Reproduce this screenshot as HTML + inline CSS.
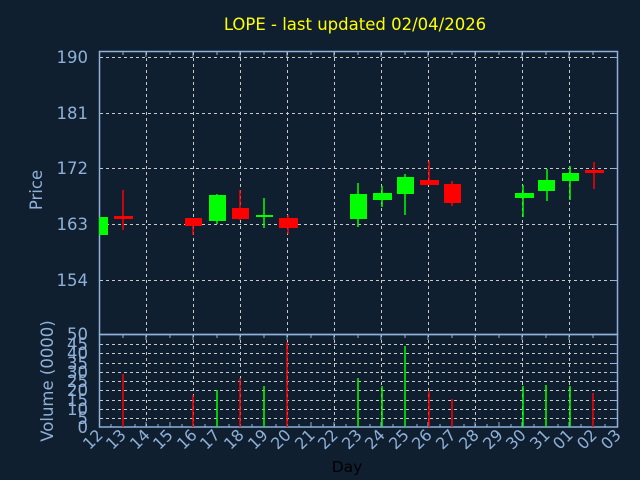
<!DOCTYPE html>
<html><head><meta charset="utf-8"><style>
html,body{margin:0;padding:0;background:#0f1f2f;}
svg{display:block;font-family:"DejaVu Sans","Liberation Sans",sans-serif;}
</style></head><body>
<svg width="640" height="480" viewBox="0 0 640 480" xmlns="http://www.w3.org/2000/svg">
<rect width="640" height="480" fill="#0f1f2f"/>
<text x="355" y="30" fill="#ffff00" font-size="16.5" text-anchor="middle">LOPE - last updated 02/04/2026</text>
<g stroke="#c8c8c8" stroke-width="1" stroke-dasharray="3,3">
<line x1="100" y1="57.5" x2="612" y2="57.5"/><line x1="100" y1="113.5" x2="612" y2="113.5"/><line x1="100" y1="168.5" x2="612" y2="168.5"/><line x1="100" y1="224.5" x2="612" y2="224.5"/><line x1="100" y1="280.5" x2="612" y2="280.5"/>
<line x1="100" y1="344.5" x2="612" y2="344.5"/><line x1="100" y1="353.5" x2="612" y2="353.5"/><line x1="100" y1="363.5" x2="612" y2="363.5"/><line x1="100" y1="372.5" x2="612" y2="372.5"/><line x1="100" y1="381.5" x2="612" y2="381.5"/><line x1="100" y1="390.5" x2="612" y2="390.5"/><line x1="100" y1="400.5" x2="612" y2="400.5"/><line x1="100" y1="409.5" x2="612" y2="409.5"/><line x1="100" y1="418.5" x2="612" y2="418.5"/>
<g><line x1="146.5" y1="52" x2="146.5" y2="426"/><line x1="193.5" y1="52" x2="193.5" y2="426"/><line x1="240.5" y1="52" x2="240.5" y2="426"/><line x1="287.5" y1="52" x2="287.5" y2="426"/><line x1="334.5" y1="52" x2="334.5" y2="426"/><line x1="381.5" y1="52" x2="381.5" y2="426"/><line x1="428.5" y1="52" x2="428.5" y2="426"/><line x1="475.5" y1="52" x2="475.5" y2="426"/><line x1="522.5" y1="52" x2="522.5" y2="426"/><line x1="569.5" y1="52" x2="569.5" y2="426"/></g>
</g>
<g stroke="#8fb0d8" stroke-width="1.5" fill="none">
<rect x="99.5" y="51.5" width="518" height="283"/>
<rect x="99.5" y="334.5" width="518" height="92.5"/>
</g>
<g stroke="#8fb0d8" stroke-width="1">
<path d="M123 52v3M146 52v5M170 52v3M193 52v5M217 52v3M240 52v5M264 52v3M287 52v5M311 52v3M334 52v5M358 52v3M381 52v5M405 52v3M428 52v5M452 52v3M475 52v5M499 52v3M522 52v5M546 52v3M569 52v5M593 52v3"/>
<path d="M123 335v3M146 335v5M170 335v3M193 335v5M217 335v3M240 335v5M264 335v3M287 335v5M311 335v3M334 335v5M358 335v3M381 335v5M405 335v3M428 335v5M452 335v3M475 335v5M499 335v3M522 335v5M546 335v3M569 335v5M593 335v3"/>
<path d="M111 427v-3M123 427v-5M135 427v-3M146 427v-5M158 427v-3M170 427v-5M182 427v-3M193 427v-5M205 427v-3M217 427v-5M229 427v-3M240 427v-5M252 427v-3M264 427v-5M276 427v-3M287 427v-5M299 427v-3M311 427v-5M323 427v-3M334 427v-5M346 427v-3M358 427v-5M370 427v-3M381 427v-5M393 427v-3M405 427v-5M417 427v-3M428 427v-5M440 427v-3M452 427v-5M464 427v-3M475 427v-5M487 427v-3M499 427v-5M511 427v-3M522 427v-5M534 427v-3M546 427v-5M558 427v-3M569 427v-5M581 427v-3M593 427v-5M605 427v-3"/>
<path d="M611 57.5h6M611 113.5h6M611 168.5h6M611 224.5h6M611 280.5h6M611 344.5h6M611 353.5h6M611 363.5h6M611 372.5h6M611 381.5h6M611 390.5h6M611 400.5h6M611 409.5h6M611 418.5h6"/>
</g>
<g stroke-width="1.5">
<rect x="99" y="217" width="9" height="18" fill="#00ff00"/>
<line x1="123" y1="190" x2="123" y2="230" stroke="#ff0000"/><rect x="114" y="216" width="19" height="3" fill="#ff0000"/>
<line x1="193" y1="218" x2="193" y2="235" stroke="#ff0000"/><rect x="185" y="218" width="17" height="8" fill="#ff0000"/>
<line x1="217" y1="194" x2="217" y2="224" stroke="#00ff00"/><rect x="209" y="195" width="17" height="26" fill="#00ff00"/>
<line x1="240" y1="190" x2="240" y2="220" stroke="#ff0000"/><rect x="232" y="208" width="17" height="11" fill="#ff0000"/>
<line x1="264" y1="198" x2="264" y2="228" stroke="#00ff00"/><rect x="256" y="215" width="17" height="2" fill="#00ff00"/>
<line x1="288" y1="215" x2="288" y2="234" stroke="#ff0000"/><rect x="279" y="218" width="19" height="10" fill="#ff0000"/>
<line x1="358" y1="183" x2="358" y2="227" stroke="#00ff00"/><rect x="350" y="194" width="17" height="25" fill="#00ff00"/>
<line x1="382" y1="186" x2="382" y2="207" stroke="#00ff00"/><rect x="373" y="193" width="19" height="7" fill="#00ff00"/>
<line x1="405" y1="174" x2="405" y2="215" stroke="#00ff00"/><rect x="397" y="177" width="17" height="17" fill="#00ff00"/>
<line x1="429" y1="161" x2="429" y2="185" stroke="#ff0000"/><rect x="420" y="180" width="19" height="5" fill="#ff0000"/>
<line x1="452" y1="181" x2="452" y2="206" stroke="#ff0000"/><rect x="444" y="184" width="17" height="19" fill="#ff0000"/>
<line x1="523" y1="185" x2="523" y2="217" stroke="#00ff00"/><rect x="515" y="193" width="19" height="5" fill="#00ff00"/>
<line x1="547" y1="169" x2="547" y2="201" stroke="#00ff00"/><rect x="538" y="180" width="17" height="11" fill="#00ff00"/>
<line x1="570" y1="166" x2="570" y2="200" stroke="#00ff00"/><rect x="562" y="173" width="17" height="8" fill="#00ff00"/>
<line x1="594" y1="162" x2="594" y2="189" stroke="#ff0000"/><rect x="585" y="170" width="19" height="3" fill="#ff0000"/>
</g>
<g stroke-width="1.5">
<line x1="123" y1="374" x2="123" y2="427" stroke="#ff0000"/>
<line x1="193" y1="395" x2="193" y2="427" stroke="#ff0000"/>
<line x1="217" y1="390" x2="217" y2="427" stroke="#00ff00"/>
<line x1="240" y1="378" x2="240" y2="427" stroke="#ff0000"/>
<line x1="264" y1="386" x2="264" y2="427" stroke="#00ff00"/>
<line x1="287" y1="342" x2="287" y2="427" stroke="#ff0000"/>
<line x1="358" y1="378" x2="358" y2="427" stroke="#00ff00"/>
<line x1="382" y1="386" x2="382" y2="427" stroke="#00ff00"/>
<line x1="405" y1="346" x2="405" y2="427" stroke="#00ff00"/>
<line x1="429" y1="391" x2="429" y2="427" stroke="#ff0000"/>
<line x1="452" y1="399" x2="452" y2="427" stroke="#ff0000"/>
<line x1="523" y1="386" x2="523" y2="427" stroke="#00ff00"/>
<line x1="546" y1="385" x2="546" y2="427" stroke="#00ff00"/>
<line x1="570" y1="386" x2="570" y2="427" stroke="#00ff00"/>
<line x1="593" y1="393" x2="593" y2="427" stroke="#ff0000"/>
</g>
<g fill="#8fb0d8" font-size="16.5" text-anchor="end">
<text x="88" y="63">190</text><text x="88" y="119">181</text><text x="88" y="174">172</text><text x="88" y="230">163</text><text x="88" y="286">154</text>
<text x="88" y="340">50</text><text x="88" y="350">45</text><text x="88" y="359">40</text><text x="88" y="369">35</text><text x="88" y="378">30</text><text x="88" y="387">25</text><text x="88" y="396">20</text><text x="88" y="406">15</text><text x="88" y="415">10</text><text x="88" y="424">5</text><text x="88" y="433">0</text>
</g>
<text transform="translate(42,190) rotate(-90)" fill="#8fb0d8" font-size="16.5" text-anchor="middle">Price</text>
<text transform="translate(53,381) rotate(-90)" fill="#8fb0d8" font-size="16.5" text-anchor="middle">Volume (0000)</text>
<g fill="#8fb0d8" font-size="16" text-anchor="end">
<text transform="translate(104,436) rotate(-45)">12</text>
<text transform="translate(127,436) rotate(-45)">13</text>
<text transform="translate(151,436) rotate(-45)">14</text>
<text transform="translate(174,436) rotate(-45)">15</text>
<text transform="translate(198,436) rotate(-45)">16</text>
<text transform="translate(221,436) rotate(-45)">17</text>
<text transform="translate(245,436) rotate(-45)">18</text>
<text transform="translate(269,436) rotate(-45)">19</text>
<text transform="translate(292,436) rotate(-45)">20</text>
<text transform="translate(316,436) rotate(-45)">21</text>
<text transform="translate(339,436) rotate(-45)">22</text>
<text transform="translate(363,436) rotate(-45)">23</text>
<text transform="translate(386,436) rotate(-45)">24</text>
<text transform="translate(410,436) rotate(-45)">25</text>
<text transform="translate(433,436) rotate(-45)">26</text>
<text transform="translate(457,436) rotate(-45)">27</text>
<text transform="translate(480,436) rotate(-45)">28</text>
<text transform="translate(504,436) rotate(-45)">29</text>
<text transform="translate(527,436) rotate(-45)">30</text>
<text transform="translate(551,436) rotate(-45)">31</text>
<text transform="translate(574,436) rotate(-45)">01</text>
<text transform="translate(598,436) rotate(-45)">02</text>
<text transform="translate(622,436) rotate(-45)">03</text>
</g>
<text x="347" y="472" fill="#000000" font-size="15.5" text-anchor="middle">Day</text>
</svg>
</body></html>
